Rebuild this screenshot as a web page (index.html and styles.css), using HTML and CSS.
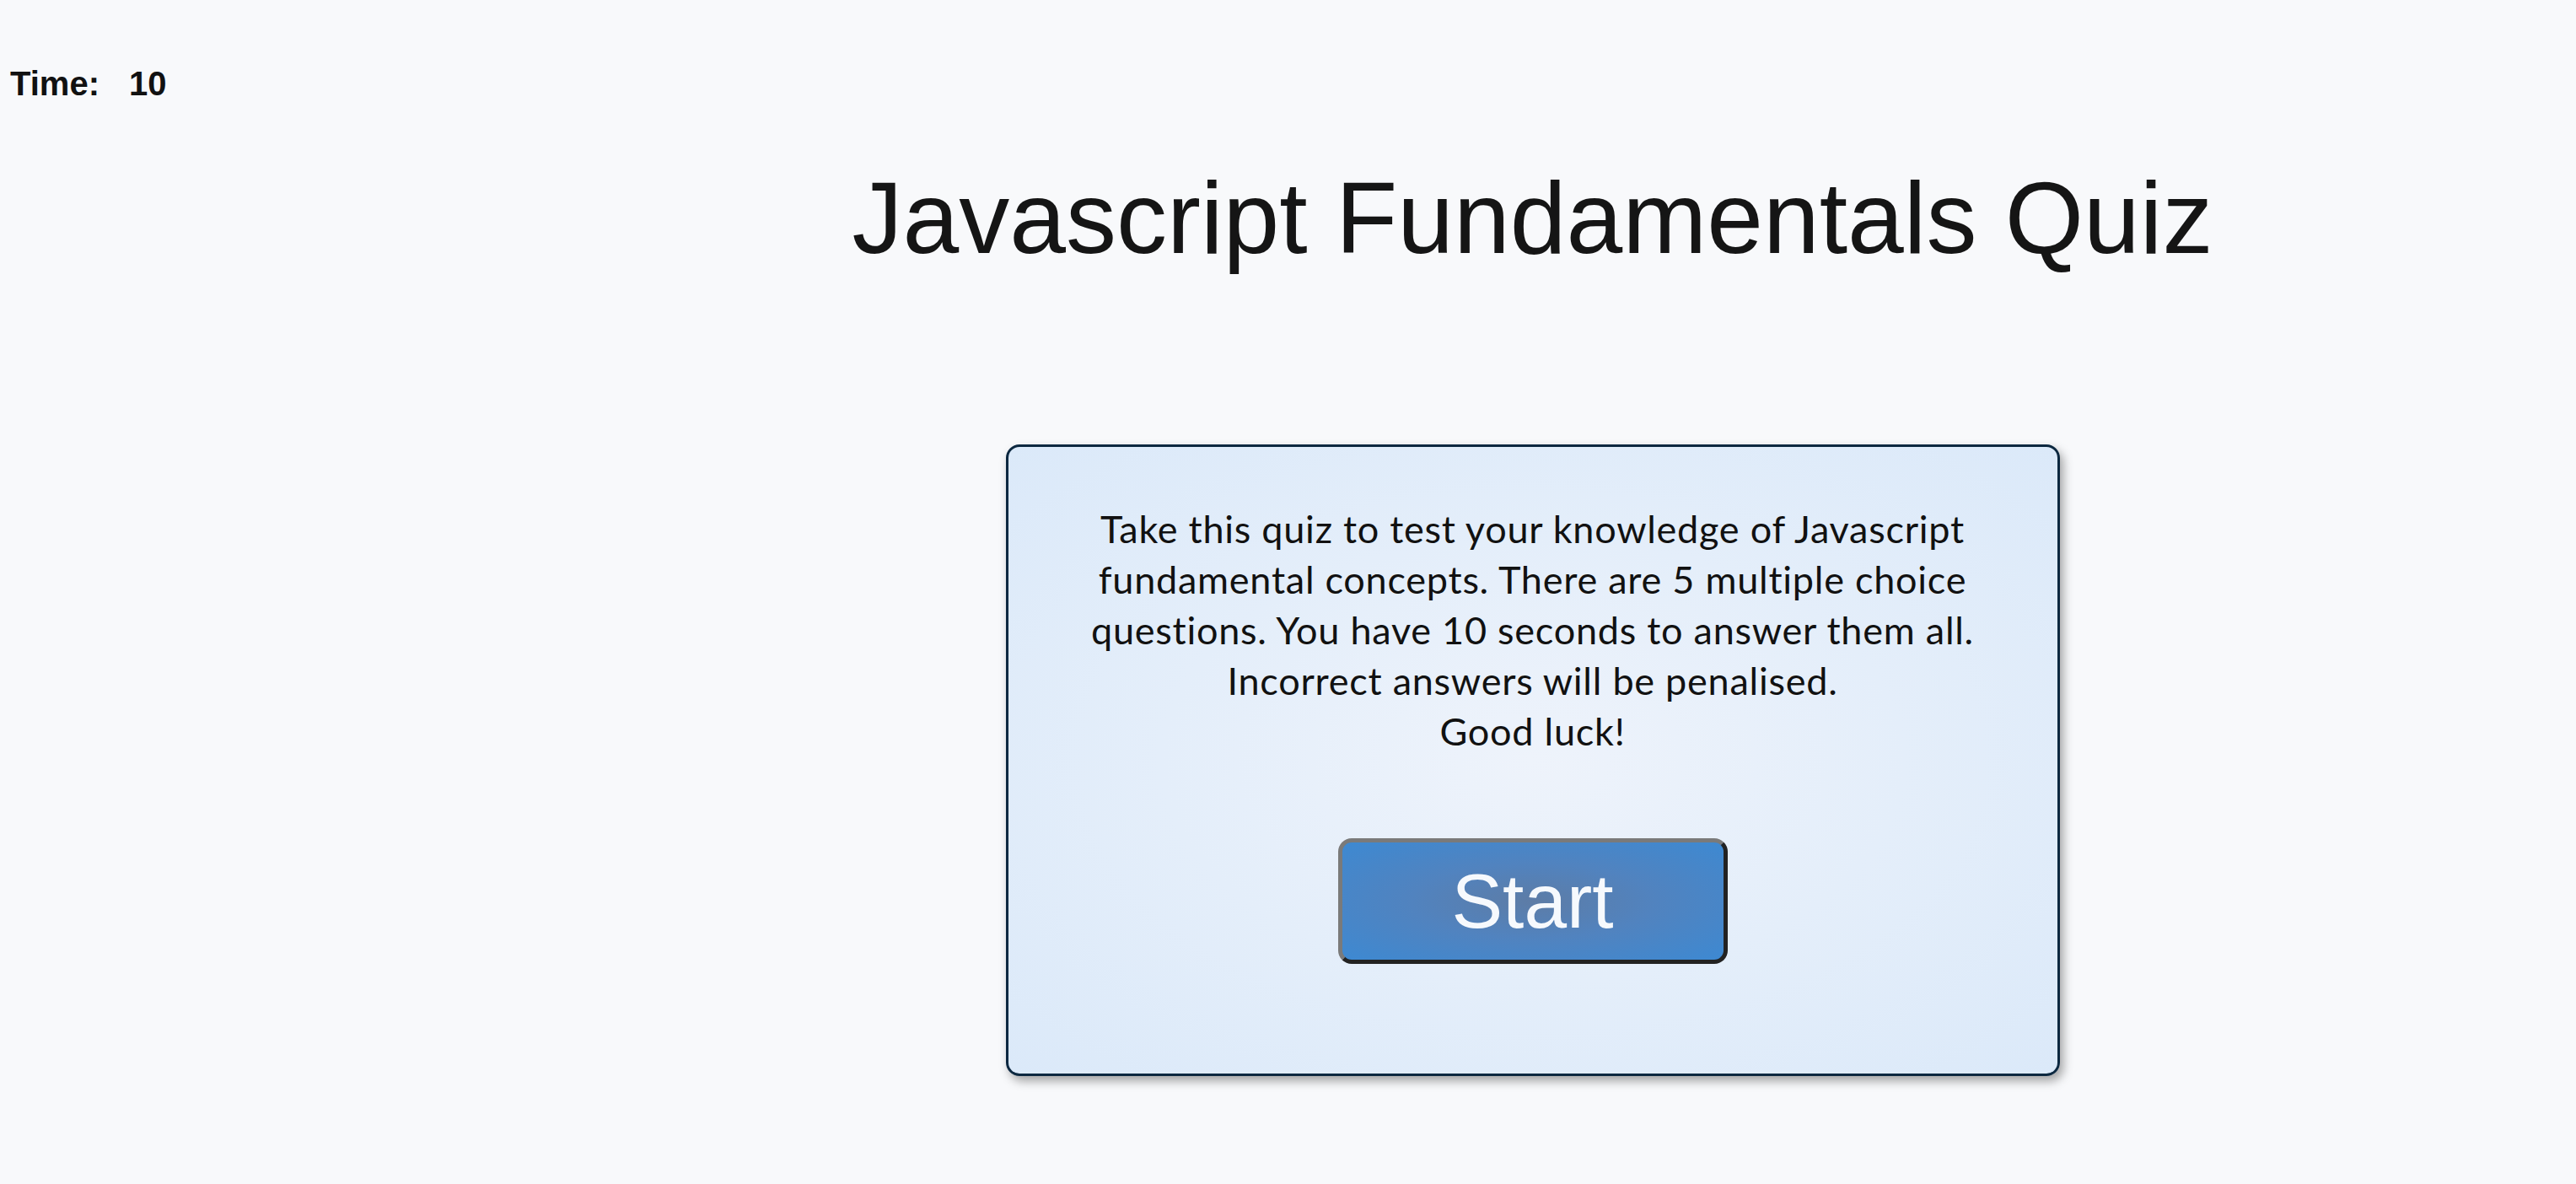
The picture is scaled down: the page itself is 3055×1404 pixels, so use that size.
FILE: index.html
```html
<!DOCTYPE html>
<html lang="en">
<head>
<meta charset="utf-8">
<title>Javascript Fundamentals Quiz</title>
<link rel="stylesheet" href="styles.css">
</head>
<body>
<header class="topbar">
  <div class="timer"><span class="timer-label">Time:</span><span class="timer-value">10</span></div>
</header>
<main class="main">
  <h1 class="title">Javascript Fundamentals Quiz</h1>
  <section class="card">
    <p class="intro">Take this quiz to test your knowledge of Javascript fundamental concepts. There are 5 multiple choice questions. You have 10 seconds to answer them all. Incorrect answers will be penalised.<br>Good luck!</p>
    <button class="start-btn" type="button">Start</button>
  </section>
</main>
</body>
</html>
```
FILE: styles.css
```css
html, body {
  margin: 0;
  padding: 0;
}
body {
  background: #f8f9fb;
  color: #111;
  font-family: "Liberation Sans", Arial, sans-serif;
  min-height: 1404px;
}
.topbar {
  padding: 76px 0 0 12px;
}
.timer {
  display: flex;
  gap: 35px;
  font-weight: bold;
  font-size: 40px;
  line-height: 46px;
  color: #111;
}
.main {
  margin-left: 580px;
  display: flex;
  flex-direction: column;
  align-items: center;
}
.title {
  margin: 67px 0 0;
  font-weight: normal;
  font-size: 120px;
  line-height: 138px;
  color: #151515;
}
.card {
  margin-top: 200px;
  box-sizing: border-box;
  width: 1250px;
  height: 749px;
  border: 3px solid #0c2840;
  border-radius: 16px;
  background: radial-gradient(ellipse at center, #eef3fb 0%, #e4eefa 50%, #dbe9f9 100%);
  box-shadow: 4px 6px 12px rgba(0, 0, 0, 0.35);
  display: flex;
  flex-direction: column;
  align-items: center;
  padding-top: 67px;
}
.intro {
  margin: 0;
  width: 1080px;
  text-align: center;
  font-family: Lato, "Open Sans", sans-serif;
  font-size: 45px;
  letter-spacing: 0.75px;
  line-height: 60px;
  color: #111;
}
.start-btn {
  margin-top: 97px;
  box-sizing: border-box;
  width: 462px;
  height: 149px;
  border: 5px solid;
  border-color: #7a7a7a #222 #222 #7a7a7a;
  border-radius: 16px;
  background: radial-gradient(ellipse at center, #5d7ca6 0%, #5183bf 45%, #3d89d2 100%);
  color: #f6f9fd;
  font-family: "Liberation Sans", Arial, sans-serif;
  font-size: 91px;
  padding: 0;
  cursor: pointer;
}
```
